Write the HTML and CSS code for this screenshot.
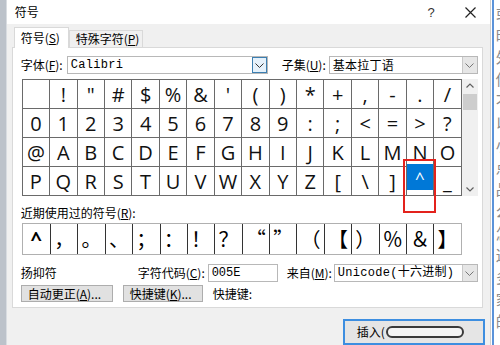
FILE: index.html
```html
<!DOCTYPE html>
<html>

<head>
    <link rel="stylesheet" href="styles.css">
</head>

<body>
    <div class="screen">
        <div class="edge-left"></div>
        <div class="dialog">
            <div class="titlebar">
                <span class="title">符号</span>
                <span class="help">?</span>
                <svg class="close" width="11" height="11" viewBox="0 0 11 11">
                    <path d="M0.5 0.5 L10.5 10.5 M10.5 0.5 L0.5 10.5" stroke="#222" stroke-width="1.2" fill="none" />
                </svg>
            </div>
            <div class="body">
                <div class="tabs">
                    <div class="tab active">符号(<u>S</u>)</div>
                    <div class="tab tab-other">特殊字符(<u>P</u>)</div>
                </div>
                <div class="panel">
                    <div class="row font-row">
                        <span class="label label-font">字体(<u>F</u>):</span>
                        <div class="combo combo-font">
                            <span class="combo-text">Calibri</span>
                            <span class="drop drop-focus">
                                <svg width="9" height="5" viewBox="0 0 9 5"><path d="M0.5 0.5 L4.5 4.5 L8.5 0.5" stroke="#333" fill="none" /></svg>
                            </span>
                        </div>
                        <span class="label label-subset">子集(<u>U</u>):</span>
                        <div class="combo combo-subset">
                            <span class="combo-text cjk">基本拉丁语</span>
                            <span class="drop">
                                <svg width="9" height="5" viewBox="0 0 9 5"><path d="M0.5 0.5 L4.5 4.5 L8.5 0.5" stroke="#777" fill="none" /></svg>
                            </span>
                        </div>
                    </div>

                    <div class="chart">
                        <div class="grid">
                            <span class="cell"></span><span class="cell">!</span><span class="cell">"</span><span class="cell">#</span>
                            <span class="cell">$</span><span class="cell">%</span><span class="cell">&amp;</span><span class="cell">'</span>
                            <span class="cell">(</span><span class="cell">)</span><span class="cell">*</span><span class="cell">+</span>
                            <span class="cell">,</span><span class="cell">-</span><span class="cell">.</span><span class="cell">/</span>

                            <span class="cell">0</span><span class="cell">1</span><span class="cell">2</span><span class="cell">3</span>
                            <span class="cell">4</span><span class="cell">5</span><span class="cell">6</span><span class="cell">7</span>
                            <span class="cell">8</span><span class="cell">9</span><span class="cell">:</span><span class="cell">;</span>
                            <span class="cell">&lt;</span><span class="cell">=</span><span class="cell">&gt;</span><span class="cell">?</span>

                            <span class="cell">@</span><span class="cell">A</span><span class="cell">B</span><span class="cell">C</span>
                            <span class="cell">D</span><span class="cell">E</span><span class="cell">F</span><span class="cell">G</span>
                            <span class="cell">H</span><span class="cell">I</span><span class="cell">J</span><span class="cell">K</span>
                            <span class="cell">L</span><span class="cell">M</span><span class="cell">N</span><span class="cell">O</span>

                            <span class="cell">P</span><span class="cell">Q</span><span class="cell">R</span><span class="cell">S</span>
                            <span class="cell">T</span><span class="cell">U</span><span class="cell">V</span><span class="cell">W</span>
                            <span class="cell">X</span><span class="cell">Y</span><span class="cell">Z</span><span class="cell">[</span>
                            <span class="cell">\</span><span class="cell">]</span><span class="cell sel"><span class="hi">^</span></span><span class="cell">_</span>
                        </div>
                        <div class="scrollbar">
                            <svg class="arrow" width="16" height="14" viewBox="0 0 16 14"><path d="M4.5 8.5 L8 5 L11.5 8.5" stroke="#606060" stroke-width="1.2" fill="none" /></svg>
                            <span class="thumb"></span>
                            <span class="track"></span>
                            <svg class="arrow" width="16" height="14" viewBox="0 0 16 14"><path d="M4.5 5.5 L8 9 L11.5 5.5" stroke="#606060" stroke-width="1.2" fill="none" /></svg>
                        </div>
                    </div>

                    <div class="recent-label">近期使用过的符号(<u>R</u>):</div>
                    <div class="recent">
                        <span class="rcell caret">^</span>
                        <span class="rcell">，</span>
                        <span class="rcell">。</span>
                        <span class="rcell">、</span>
                        <span class="rcell">；</span>
                        <span class="rcell">：</span>
                        <span class="rcell">！</span>
                        <span class="rcell">？</span>
                        <span class="rcell">“</span>
                        <span class="rcell">”</span>
                        <span class="rcell">（</span>
                        <span class="rcell">【</span>
                        <span class="rcell">）</span>
                        <span class="rcell">％</span>
                        <span class="rcell">＆</span>
                        <span class="rcell">】</span>
                    </div>

                    <div class="row code-row">
                        <span class="label label-name">扬抑符</span>
                        <span class="label label-code">字符代码(<u>C</u>):</span>
                        <span class="field field-code">005E</span>
                        <span class="label label-from">来自(<u>M</u>):</span>
                        <div class="combo combo-from">
                            <span class="combo-text">Unicode(十六进制)</span>
                            <span class="drop">
                                <svg width="9" height="5" viewBox="0 0 9 5"><path d="M0.5 0.5 L4.5 4.5 L8.5 0.5" stroke="#777" fill="none" /></svg>
                            </span>
                        </div>
                    </div>

                    <div class="row btn-row">
                        <span class="btn btn-auto">自动更正(<u>A</u>)...</span>
                        <span class="btn btn-key">快捷键(<u>K</u>)...</span>
                        <span class="label label-key">快捷键:</span>
                    </div>
                </div>

                <div class="footer">
                    <div class="insert-btn">插入(<span class="smudge"></span></div>
                </div>
            </div>
        </div>
        <div class="edge-right">
            <div class="edge-line"></div>
            <div class="doc-text">或<br>时<br>外<br>你<br>不<br>以<br>小<br>点<br>品<br>么<br>怎<br>这<br>多<br>家<br>的</div>
        </div>
        <div class="mark"></div>
    </div>
</body>

</html>
```

FILE: styles.css
```css
body {
    margin: 0;
    font-family: "Noto Sans CJK SC", "Liberation Sans", sans-serif;
    font-size: 12px;
    color: #000;
    background-color: #fff;
}

u {
    text-underline-offset: 1px;
}

.screen {
    position: relative;
    width: 500px;
    height: 345px;
    display: flex;
    overflow: hidden;
}

.edge-left {
    width: 6px;
    background-color: #bcc2ca;
    border-right: 1px solid #d8dce1;
}

.dialog {
    width: 483px;
    display: flex;
    flex-direction: column;
    background-color: #f0f0f0;
}

/* title bar */
.titlebar {
    height: 29px;
    background-color: #fff;
    display: flex;
    align-items: center;
    padding: 0 14px 0 8px;
}

.title {
    flex: 1;
    line-height: 16px;
}

.help {
    font-family: "Liberation Sans", sans-serif;
    font-size: 13px;
    color: #333;
    margin-right: 30px;
}

.body {
    flex: 1;
    padding: 3px 7px 0 5px;
}

/* tabs */
.tabs {
    display: flex;
    align-items: flex-end;
    height: 21px;
    padding-left: 2px;
    position: relative;
    z-index: 1;
}

.tab {
    box-sizing: border-box;
    height: 17px;
    line-height: 15px;
    padding-left: 6px;
    border: 1px solid #d9d9d9;
    border-bottom: none;
    background-color: #f0f0f0;
}

.tab.active {
    width: 55px;
    height: 21px;
    line-height: 19px;
    background-color: #fff;
}

.tab-other {
    width: 74px;
    margin-bottom: 1px;
}

.panel {
    box-sizing: border-box;
    height: 261px;
    margin-top: -1px;
    padding: 8px 0 0 8px;
    background-color: #fff;
    border: 1px solid #d9d9d9;
}

.row {
    display: flex;
    align-items: center;
    height: 18px;
}

.label {
    flex-shrink: 0;
    line-height: 16px;
}

.label-font {
    width: 46px;
}

.label-subset {
    width: 47px;
    margin-left: 14px;
}

.combo {
    box-sizing: border-box;
    height: 18px;
    display: flex;
    border: 1px solid #b8b8b8;
    background-color: #fff;
}

.combo-text {
    flex: 1;
    padding-left: 3px;
    font-family: "Liberation Mono", "Noto Sans CJK SC", monospace;
    font-size: 12px;
    line-height: 16px;
    letter-spacing: 0.3px;
    white-space: nowrap;
}

.combo-text.cjk {
    font-family: "Noto Sans CJK SC", sans-serif;
}

.drop {
    box-sizing: border-box;
    width: 15px;
    display: flex;
    align-items: center;
    justify-content: center;
    background-color: #e6e6e6;
    border-left: 1px solid #c8c8c8;
}

.drop-focus {
    background-color: #e5f1fb;
    border: 1px solid #3c7fb1;
}

.combo-font {
    width: 201px;
}

.combo-subset {
    width: 149px;
}

/* character grid */
.chart {
    display: flex;
    margin: 5px 0 0 1px;
}

.grid {
    box-sizing: border-box;
    width: 440px;
    height: 117px;
    display: grid;
    grid-template-columns: repeat(16, 1fr);
    grid-template-rows: repeat(4, 1fr);
    gap: 1px;
    background-color: #6a6a6a;
    border: 1px solid #6a6a6a;
}

.cell {
    display: flex;
    align-items: center;
    justify-content: center;
    background-color: #fff;
    font-family: "Open Sans", "Noto Sans", sans-serif;
    font-size: 20px;
    color: #111;
}

.cell.sel {
    position: relative;
}

.hi {
    position: absolute;
    left: 0;
    right: 0;
    top: -3px;
    height: 26px;
    display: flex;
    align-items: center;
    justify-content: center;
    background-color: #0078d7;
    color: #fff;
    font-size: 17px;
}

.scrollbar {
    width: 16px;
    height: 117px;
    display: flex;
    flex-direction: column;
    background-color: #f0f0f0;
}

.arrow {
    flex-shrink: 0;
}

.thumb {
    height: 16px;
    margin: 1px 1px 0;
    background-color: #cdcdcd;
}

.track {
    flex: 1;
}

/* recently used */
.recent-label {
    margin-top: 9px;
    line-height: 16px;
}

.recent {
    box-sizing: border-box;
    width: 440px;
    height: 32px;
    margin: 2px 0 0 1px;
    display: grid;
    grid-template-columns: repeat(16, 1fr);
    border: 1px solid #b0b0b0;
}

.rcell {
    display: flex;
    align-items: center;
    justify-content: center;
    border-left: 1px solid #333;
    font-size: 20px;
    line-height: 1;
}

.rcell:first-child {
    border-left: none;
}

.rcell.caret {
    font-family: "Open Sans", sans-serif;
    font-weight: bold;
    font-size: 20px;
}

/* code + buttons */
.code-row {
    margin-top: 9px;
}

.label-name {
    width: 117px;
}

.label-code {
    width: 70px;
}

.field {
    box-sizing: border-box;
    height: 18px;
    border: 1px solid #b8b8b8;
    padding-left: 3px;
    font-family: "Liberation Mono", monospace;
    font-size: 12px;
    line-height: 16px;
}

.field-code {
    width: 70px;
}

.label-from {
    width: 47px;
    margin-left: 9px;
}

.combo-from {
    width: 144px;
}

.btn-row {
    margin-top: 3px;
    height: 17px;
}

.btn {
    box-sizing: border-box;
    height: 17px;
    line-height: 15px;
    padding-left: 6px;
    background-color: #e1e1e1;
    border: 1px solid #adadad;
}

.btn-auto {
    width: 92px;
}

.btn-key {
    width: 80px;
    margin-left: 10px;
}

.label-key {
    margin-left: 10px;
}

/* footer */
.footer {
    display: flex;
    padding: 11px 0 0 331px;
}

.insert-btn {
    box-sizing: border-box;
    width: 142px;
    height: 26px;
    flex-shrink: 0;
    display: flex;
    align-items: flex-start;
    padding: 3px 0 0 12px;
    line-height: 16px;
    background-color: #e5e5e5;
    border: 2px solid #3d8ee0;
}

.smudge {
    box-sizing: border-box;
    width: 78px;
    height: 12px;
    margin: 2px 0 0 1px;
    border: 2px solid #3a3a3a;
    border-radius: 6px;
    background-color: #f4f4f4;
}

/* background document at the right */
.edge-right {
    width: 10px;
    display: flex;
    overflow: hidden;
    background-color: #fff;
    border-left: 1px solid #d0d0d0;
}

.edge-line {
    width: 2px;
    flex-shrink: 0;
    margin-left: 1px;
    background-color: #5b93d9;
}

.doc-text {
    padding: 2px 0 0 2px;
    font-size: 15px;
    line-height: 22px;
    color: #8a8a8a;
    white-space: nowrap;
}

/* red annotation box */
.mark {
    position: absolute;
    left: 403px;
    top: 159px;
    width: 33px;
    height: 54px;
    box-sizing: border-box;
    border: 2px solid #e3221c;
}
```
